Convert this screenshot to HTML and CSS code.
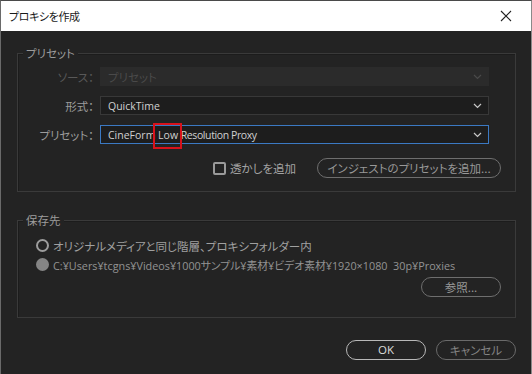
FILE: index.html
```html
<!DOCTYPE html>
<html lang="ja">
<head>
<meta charset="utf-8">
<link rel="stylesheet" href="styles.css">
</head>
<body>
<div class="window">
  <div class="titlebar">
    <span class="title">プロキシを作成</span>
    <svg class="close" width="12" height="12" viewBox="0 0 12 12"><path d="M1 1L11 11M11 1L1 11" stroke="#222" stroke-width="1.1" fill="none"/></svg>
  </div>
  <div class="content">
    <div class="group group-preset">
      <span class="legend">プリセット</span>
      <div class="row">
        <span class="label disabled">ソース：</span>
        <div class="select select-disabled"><span>プリセット</span><svg class="chev" width="9" height="6" viewBox="0 0 9 6"><path d="M1 1L4.5 4.5L8 1" stroke="#4a4a4a" stroke-width="1.2" fill="none"/></svg></div>
      </div>
      <div class="row">
        <span class="label">形式：</span>
        <div class="select"><span class="latin">QuickTime</span><svg class="chev" width="9" height="6" viewBox="0 0 9 6"><path d="M1 1L4.5 4.5L8 1" stroke="#c8c8c8" stroke-width="1.2" fill="none"/></svg></div>
      </div>
      <div class="row">
        <span class="label">プリセット：</span>
        <div class="select select-focus"><span class="latin">CineForm <span class="mark">Low</span> <span class="tight">Resolution Proxy</span></span><svg class="chev" width="9" height="6" viewBox="0 0 9 6"><path d="M1 1L4.5 4.5L8 1" stroke="#c8c8c8" stroke-width="1.2" fill="none"/></svg></div>
      </div>
      <div class="row row-actions">
        <label class="check"><span class="box"></span><span>透かしを追加</span></label>
        <button class="btn btn-ingest">インジェストのプリセットを追加...</button>
      </div>
    </div>

    <div class="group group-dest">
      <span class="legend">保存先</span>
      <div class="radio-row"><span class="radio"></span><span>オリジナルメディアと同じ階層、プロキシフォルダー内</span></div>
      <div class="radio-row path"><span class="radio radio-on"></span><span class="path-text">C:¥Users¥tcgns¥Videos¥1000サンプル¥素材¥ビデオ素材¥1920×1080&nbsp;&nbsp;30p¥Proxies</span></div>
      <div class="browse-row"><button class="btn btn-browse">参照...</button></div>
    </div>

    <div class="footer">
      <button class="btn btn-ok">OK</button>
      <button class="btn btn-cancel">キャンセル</button>
    </div>
  </div>
</div>
</body>
</html>
```

FILE: styles.css
```css
* { box-sizing: border-box; }
html, body {
  margin: 0;
  padding: 0;
  width: 532px;
  height: 374px;
  overflow: hidden;
  background: #232323;
}
body {
  font-family: "Noto Sans CJK JP", sans-serif;
  font-size: 11.5px;
  font-feature-settings: "palt";
  color: #a8a8a8;
}
.window {
  width: 532px;
  height: 374px;
  border-top: 1px solid #4a4a4a;
  border-left: 1px solid #6a6a6a;
  border-right: 1px solid #8a8a8a;
  background: #232323;
  display: flex;
  flex-direction: column;
}
.titlebar {
  height: 30px;
  background: #ffffff;
  display: flex;
  align-items: center;
  justify-content: space-between;
  padding: 0 19px 0 8px;
  flex: none;
}
.title {
  color: #1a1a1a;
  font-size: 11px;
  letter-spacing: -0.4px;
}
.content {
  padding: 14px 15px 0 16px;
  display: flex;
  flex-direction: column;
}
.group {
  position: relative;
  border: 1px solid #3a3a3a;
  box-shadow: inset 1px 1px 0 #1c1c1c;
}
.legend {
  position: absolute;
  top: -9px;
  left: 5px;
  padding: 0 3px;
  background: #232323;
  line-height: 16px;
  color: #9c9c9c;
}
.group-preset {
  margin-top: 8px;
  height: 139px;
  padding: 13px 26px 0 0;
  display: flex;
  flex-direction: column;
  gap: 10px;
}
.row {
  display: flex;
  align-items: center;
  height: 19px;
}
.label {
  width: 76px;
  text-align: right;
  margin-right: 6px;
  color: #9c9c9c;
}
.label.disabled { color: #585858; }
.select {
  flex: 1;
  height: 19px;
  display: flex;
  align-items: center;
  justify-content: space-between;
  padding: 0 6px 0 7px;
  background: #1d1d1d;
  border: 1px solid #383838;
  color: #d0d0d0;
}
.select-disabled {
  background: #2b2b2b;
  border-color: #2b2b2b;
  color: #4a4a4a;
}
.select-focus {
  border-color: #3b79c3;
}
.latin {
  font-family: "Open Sans", "Noto Sans CJK JP", sans-serif;
  font-size: 10.5px;
}
.tight {
  letter-spacing: -0.4px;
}
.mark {
  position: relative;
}
.mark::after {
  content: "";
  position: absolute;
  left: -5px;
  right: -4px;
  top: -5px;
  bottom: -7px;
  border: 2px solid #d8121b;
}
.row-actions {
  margin-top: 4px;
  height: 20px;
  justify-content: flex-end;
  margin-right: -12px;
}
.check {
  display: flex;
  align-items: center;
  gap: 4px;
  color: #a4a4a4;
  margin-right: 21px;
}
.box {
  width: 13px;
  height: 13px;
  border: 2px solid #9a9a9a;
  border-radius: 2px;
}
.btn {
  font-family: "Noto Sans CJK JP", sans-serif;
  font-size: 11.5px;
  font-feature-settings: "palt";
  background: transparent;
  border: 1px solid #6e6e6e;
  border-radius: 10px;
  color: #989898;
  height: 20px;
  padding: 0;
  line-height: 18px;
}
.btn-ingest {
  width: 184px;
}
.group-dest {
  margin-top: 28px;
  height: 98px;
  padding: 15px 14px 0 18px;
  display: flex;
  flex-direction: column;
}
.radio-row {
  display: flex;
  align-items: center;
  gap: 4px;
  height: 19px;
  color: #a0a0a0;
}
.radio-row.path { color: #939393; }
.path-text {
  font-family: "Open Sans", "Noto Sans CJK JP", sans-serif;
  font-size: 10.8px;
}
.radio {
  width: 13px;
  height: 13px;
  border: 2px solid #9c9c9c;
  border-radius: 50%;
}
.radio-on {
  border-color: #858585;
  background: #858585;
}
.browse-row {
  display: flex;
  justify-content: flex-end;
  margin-top: 3px;
}
.btn-browse { width: 80px; }
.footer {
  margin-top: 22px;
  display: flex;
  justify-content: flex-end;
  gap: 10px;
}
.btn-ok {
  width: 80px;
  border-color: #b8b8b8;
  color: #dcdcdc;
  font-family: "Open Sans", sans-serif;
}
.btn-cancel {
  width: 80px;
  border-color: #6a6a6a;
  color: #858585;
}
```
